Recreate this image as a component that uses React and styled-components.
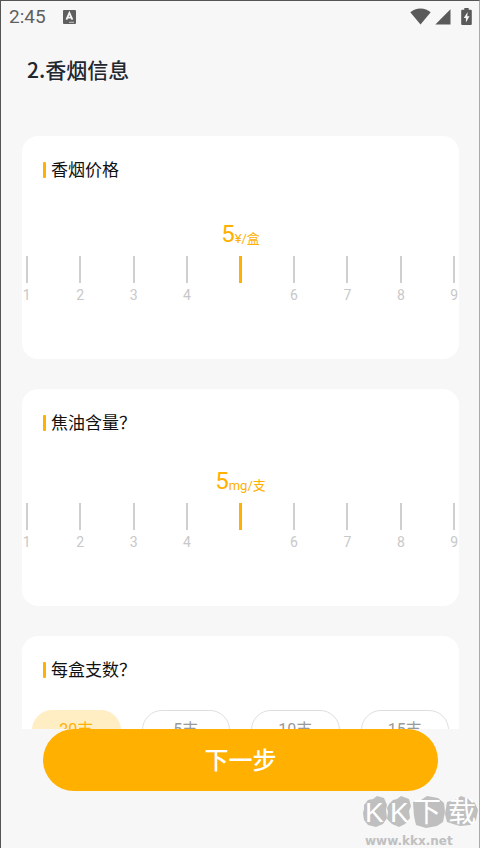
import { useState } from "react";
import styled, { createGlobalStyle } from "styled-components";

const PRICES = [1, 2, 3, 4, 5, 6, 7, 8, 9];
const PACKS = [20, 5, 10, 15];

const RulerCard = ({ title, name, unit, space }) => {
  const [value, setValue] = useState(5);

  return (
    <CardStyled>
      <CardTitle>{title}</CardTitle>
      <ValueStyled $space={space}>
        {value}
        <small>{unit}</small>
      </ValueStyled>
      <RulerStyled role="radiogroup" aria-label={title}>
        {PRICES.map((n) => (
          <TickLabel key={n} $active={n === value}>
            <Tick
              type="radio"
              name={name}
              value={n}
              checked={n === value}
              onChange={() => setValue(n)}
            />
            <span>{n}</span>
          </TickLabel>
        ))}
      </RulerStyled>
    </CardStyled>
  );
};

const PackCard = () => {
  const [pack, setPack] = useState(20);

  return (
    <CardStyled>
      <CardTitle>每盒支数？</CardTitle>
      <PackList role="radiogroup" aria-label="每盒支数">
        {PACKS.map((n) => (
          <PackOption key={n} $active={n === pack}>
            <input
              type="radio"
              name="pack"
              value={n}
              checked={n === pack}
              onChange={() => setPack(n)}
            />
            {n}支
          </PackOption>
        ))}
      </PackList>
    </CardStyled>
  );
};

const StatusBar = () => (
  <StatusBarStyled>
    <time>2:45</time>
    <svg width="13" height="14" viewBox="0 0 13 14">
      <rect width="13" height="14" rx="1" fill="#5f5f5f" />
      <path d="M3.4 9.6 6.4 3l3 6.600M4.500 7.600h3.900" fill="none" stroke="#f7f7f7" strokeWidth="1.8" />
      <path d="M6 12.3h5" stroke="#c9c9c9" strokeWidth="1" />
    </svg>
    <StatusIcons>
      <svg width="21" height="17" viewBox="0 0 21 17">
        <path d="M10.5 16.5.3 4.2C3 1.9 6.600.5 10.500.5S18 1.900 20.700 4.200Z" fill="#5a5a5a" />
      </svg>
      <svg width="16" height="16" viewBox="0 0 16 16">
        <path d="M15.500.3V15.500H.3Z" fill="#5a5a5a" />
      </svg>
      <svg width="11" height="17" viewBox="0 0 11 17">
        <path d="M3.300 0h4.400v1.800h2.100q1 0 1 1V16q0 1-1 1H1.200q-1 0-1-1V2.800q0-1 1-1h2.100Z" fill="#5a5a5a" />
        <path d="M6.600 4 2.800 10h2.100v4.400L8.500 8.200H6.300Z" fill="#f7f7f7" />
      </svg>
    </StatusIcons>
  </StatusBarStyled>
);

const Watermark = () => (
  <WatermarkStyled>
    <svg width="116" height="34" viewBox="0 0 116 34">
      <g fill="#bfbfbf">
        <path d="M1 9 5 4l5-1 4-3 7 2 3 7-1 5 1 8-4 6-7 3-8-2-4-5-1-7 1-4Z" />
        <path d="M26 8 30 4l4-1 4-3 8 3 2 7-2 5 1 7-5 6-6 3-7-3-5-5 1-7-1-4Z" />
        <path d="m50 6 8-2 6-4 11 2 6 5 1 9-2 10-6 4-11 2-10-3-2-9Z" />
        <path d="m84 6 8-2 6-4 8 3 6 4 3 7-2 10-6 5-10 1-7-2-6-2-2-8Z" />
      </g>
      <text x="2" y="26">K</text>
      <text x="27" y="26">K</text>
      <text x="50" y="26">下</text>
      <text x="85" y="26">载</text>
    </svg>
    <span>www.kkx.net</span>
  </WatermarkStyled>
);

const App = () => {
  return (
    <>
      <GlobalStyle />
      <PageStyled>
        <StatusBar />
        <ContentStyled>
          <h1>2.香烟信息</h1>
          <RulerCard title="香烟价格" name="price" unit="¥/盒" space={37} />
          <RulerCard title="焦油含量？" name="tar" unit="mg/支" space={31} />
          <PackCard />
        </ContentStyled>
        <FooterStyled>
          <NextButton type="button">下一步</NextButton>
          <Watermark />
        </FooterStyled>
      </PageStyled>
    </>
  );
};

const GlobalStyle = createGlobalStyle`
  * {
    box-sizing: border-box;
  }
  body {
    margin: 0;
    background: #f7f7f7;
    font-family: Roboto, "Noto Sans CJK SC", sans-serif;
  }
`;

const PageStyled = styled.div`
  display: flex;
  flex-direction: column;
  height: 100vh;
  border-top: 1px solid #555;
  border-left: 1px solid #555;
  border-right: 1px solid #aaa;
`;

const StatusBarStyled = styled.header`
  display: flex;
  align-items: center;
  flex-shrink: 0;
  gap: 17px;
  height: 31px;
  padding: 0 7px 0 8px;
  font-size: 19px;
  color: #5f5f5f;
`;

const StatusIcons = styled.div`
  display: flex;
  align-items: center;
  gap: 4px;
  margin-left: auto;

  svg:last-child {
    margin-left: 6px;
  }
`;

const ContentStyled = styled.main`
  display: flex;
  flex-direction: column;
  flex: 1;
  gap: 30px;
  min-height: 0;
  padding: 0 20px 30px 21px;
  overflow-y: auto;
  scrollbar-width: none;

  h1 {
    margin: 21px 5px;
    font-family: "Noto Sans CJK SC", sans-serif;
    font-size: 21px;
    line-height: 32px;
    font-weight: 500;
    color: #1f2730;
  }
`;

const CardStyled = styled.section`
  flex-shrink: 0;
  padding: 21px 0 55px;
  border-radius: 16px;
  background: #fff;
  overflow: hidden;
`;

const CardTitle = styled.h2`
  display: flex;
  align-items: center;
  gap: 5px;
  margin: 0 21px;
  font-size: 17px;
  line-height: 26px;
  font-weight: 400;
  color: #111;

  &::before {
    content: "";
    width: 3px;
    height: 16px;
    border-radius: 1px;
    background: #ffb000;
  }
`;

const ValueStyled = styled.div`
  display: flex;
  justify-content: center;
  align-items: flex-end;
  margin-top: ${({ $space }) => $space}px;
  height: 28px;
  font-size: 24px;
  line-height: 28px;
  color: #ffb000;

  small {
    font-size: 13px;
    line-height: 18px;
  }
`;

/* runs past both card edges so the outer marks sit close to them */
const RulerStyled = styled.div`
  display: grid;
  grid-template-columns: repeat(9, 1fr);
  margin: 8px -22px 0;
`;

const TickLabel = styled.label`
  display: flex;
  flex-direction: column;
  align-items: center;
  gap: 4px;
  font-size: 14px;
  line-height: 17px;
  color: #c8c8c8;
  cursor: pointer;

  span {
    visibility: ${({ $active }) => ($active ? "hidden" : "visible")};
  }
`;

const Tick = styled.input`
  appearance: none;
  width: 2px;
  height: 27px;
  margin: 0;
  background: #cfcfcf;

  &:checked {
    width: 3px;
    background: #ffb000;
  }
`;

const PackList = styled.div`
  display: grid;
  grid-template-columns: repeat(4, 1fr);
  gap: 21px;
  margin: 27px 10px 0;
`;

const PackOption = styled.label`
  display: flex;
  justify-content: center;
  align-items: center;
  height: 40px;
  border: 1px solid ${({ $active }) => ($active ? "#ffedc4" : "#dedede")};
  border-radius: 20px;
  background: ${({ $active }) => ($active ? "#ffedc4" : "#fff")};
  font-size: 16px;
  line-height: 24px;
  color: ${({ $active }) => ($active ? "#ffb000" : "#999")};
  cursor: pointer;

  input {
    appearance: none;
    width: 0;
    margin: 0;
  }
`;

const FooterStyled = styled.footer`
  position: relative;
  flex-shrink: 0;
  padding: 0 41px 57px 42px;
`;

const NextButton = styled.button`
  display: block;
  width: 100%;
  height: 62px;
  padding: 0 0 3px;
  border: 0;
  border-radius: 31px;
  background: #ffb000;
  font-family: inherit;
  font-size: 24px;
  font-weight: 500;
  color: #fff;
  cursor: pointer;
`;

const WatermarkStyled = styled.div`
  position: absolute;
  right: 0;
  bottom: -2px;
  display: flex;
  flex-direction: column;
  gap: 2px;
  width: 116px;
  pointer-events: none;

  text {
    font-family: "Liberation Sans", "Noto Sans CJK SC", sans-serif;
    font-size: 28px;
    fill: #fff;
  }

  span {
    padding-left: 2px;
    font-family: "DejaVu Sans", sans-serif;
    font-size: 12px;
    line-height: 18px;
    font-weight: 700;
    color: #c0c0c0;
  }
`;

export default App;
